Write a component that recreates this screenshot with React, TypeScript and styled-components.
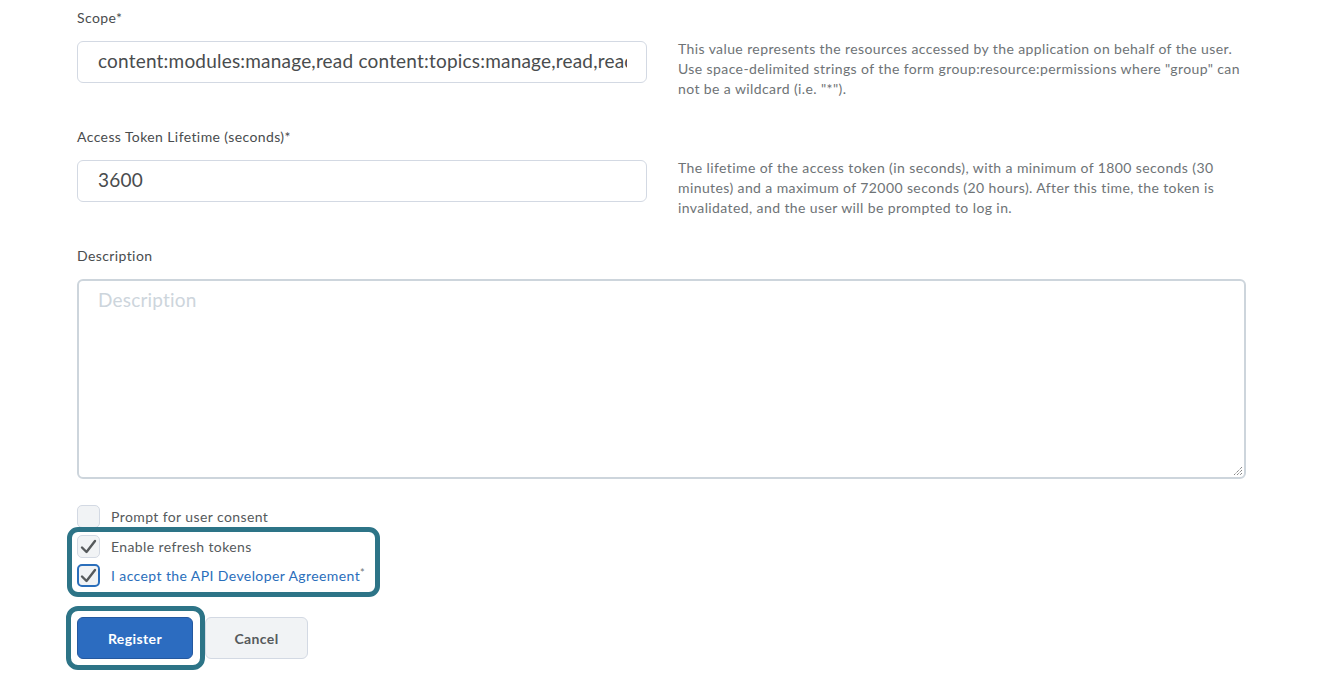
import React from "react";
import styled, { createGlobalStyle } from "styled-components";

const Global = createGlobalStyle`
  html, body { margin: 0; padding: 0; background: #ffffff; }
  body { font-family: Lato, "Open Sans", sans-serif; color: #494c4e; }
  *, *::before, *::after { box-sizing: border-box; }
`;

const Page = styled.div`
  padding: 8px 83px 0 77px;
  width: 1329px;
  min-height: 685px;
`;

const Field = styled.div<{ $last?: boolean }>`
  margin-bottom: ${(p) => (p.$last ? "27px" : "28px")};
`;

const Label = styled.div`
  font-size: 14px;
  letter-spacing: 0.4px;
  line-height: 20px;
  color: #494c4e;
  margin-bottom: 13px;
`;

const Row = styled.div`
  display: grid;
  grid-template-columns: 570px 1fr;
  column-gap: 31px;
  align-items: start;
`;

const TextInput = styled.div`
  height: 42px;
  border: 1px solid #d3d9e3;
  border-radius: 6px;
  padding: 0 19px 4px 20px;
  display: flex;
  align-items: center;
  font-size: 19px;
  letter-spacing: 0.2px;
  color: #494c4e;
`;

const InputValue = styled.span`
  display: block;
  white-space: nowrap;
  overflow: hidden;
  flex: 1;
`;

const Help = styled.p`
  margin: -2px 0 0;
  font-size: 14px;
  letter-spacing: 0.4px;
  line-height: 20px;
  color: #6e7376;
  max-width: 570px;
`;

const TextArea = styled.div`
  height: 200px;
  border: 2px solid #cdd5dc;
  border-radius: 6px;
  padding: 7px 19px;
  font-size: 19px;
  letter-spacing: 0.2px;
  color: #cdd5dc;
  position: relative;
`;

const Grip = styled.svg`
  position: absolute;
  right: 1px;
  bottom: 1px;
`;

const Checks = styled.div`
  margin-top: -1px;
  display: flex;
  flex-direction: column;
  gap: 7px;
`;

const Highlighted = styled.div`
  position: relative;
  display: flex;
  flex-direction: column;
  gap: 6px;
  &::after {
    content: "";
    position: absolute;
    left: -10px;
    top: -8px;
    width: 313px;
    height: 70px;
    border: 5px solid #2d7487;
    border-radius: 11px;
    pointer-events: none;
  }
`;

const CheckRow = styled.label<{ $link?: boolean }>`
  display: flex;
  align-items: center;
  gap: 11px;
  height: 23px;
  font-size: 14px;
  letter-spacing: 0.4px;
  color: ${(p) => (p.$link ? "#2a6ebb" : "#565a5c")};
`;

const Box = styled.span<{ $focus?: boolean }>`
  width: 23px;
  height: 23px;
  border-radius: 5px;
  background: #f1f3f5;
  border: ${(p) => (p.$focus ? "2px solid #2a6ebb" : "1px solid #d3d9e3")};
  display: flex;
  align-items: center;
  justify-content: center;
  flex: none;
`;

const Star = styled.span`
  font-size: 11px;
  position: relative;
  top: -4px;
  color: #6e7376;
`;

const Actions = styled.div`
  display: flex;
  gap: 12px;
  margin-top: 30px;
  align-items: center;
`;

const Button = styled.button<{ $primary?: boolean }>`
  font-family: Lato, sans-serif;
  font-weight: 700;
  font-size: 14px;
  letter-spacing: 0.4px;
  height: 42px;
  border-radius: 6px;
  cursor: pointer;
  width: ${(p) => (p.$primary ? "116px" : "103px")};
  background: ${(p) => (p.$primary ? "#2c6cc0" : "#f1f3f5")};
  color: ${(p) => (p.$primary ? "#ffffff" : "#565a5c")};
  border: 1px solid ${(p) => (p.$primary ? "#24589f" : "#d3d9e3")};
`;

const Ring = styled.div`
  position: relative;
  display: flex;
  &::after {
    content: "";
    position: absolute;
    left: -11px;
    top: -11px;
    right: -12px;
    bottom: -11px;
    border: 5px solid #2d7487;
    border-radius: 12px;
    pointer-events: none;
  }
`;

const Check = () => (
  <svg width="17" height="15" viewBox="0 0 17 15">
    <path d="M2 8.5 L6.5 13 L15 2" fill="none" stroke="#565a5c" strokeWidth="2.4" strokeLinecap="round" strokeLinejoin="round" />
  </svg>
);

export default function App() {
  return (
    <>
      <Global />
      <Page>
        <Field>
          <Label>Scope*</Label>
          <Row>
            <TextInput>
              <InputValue>content:modules:manage,read content:topics:manage,read,read</InputValue>
            </TextInput>
            <Help>
              This value represents the resources accessed by the application on behalf of the user. Use
              space-delimited strings of the form group:resource:permissions where "group" can not be a
              wildcard (i.e. "*").
            </Help>
          </Row>
        </Field>
        <Field>
          <Label>Access Token Lifetime (seconds)*</Label>
          <Row>
            <TextInput>
              <InputValue>3600</InputValue>
            </TextInput>
            <Help>
              The lifetime of the access token (in seconds), with a minimum of 1800 seconds (30 minutes)
              and a maximum of 72000 seconds (20 hours). After this time, the token is invalidated, and
              the user will be prompted to log in.
            </Help>
          </Row>
        </Field>
        <Field $last>
          <Label>Description</Label>
          <TextArea>
            Description
            <Grip width="12" height="12" viewBox="0 0 12 12">
              <path d="M11 3 L3 11 M11 6 L6 11 M11 9 L9 11" stroke="#555" strokeWidth="1" strokeDasharray="1 1" />
            </Grip>
          </TextArea>
        </Field>
        <Checks>
          <CheckRow>
            <Box />
            Prompt for user consent
          </CheckRow>
          <Highlighted>
            <CheckRow>
              <Box>
                <Check />
              </Box>
              Enable refresh tokens
            </CheckRow>
            <CheckRow $link>
              <Box $focus>
                <Check />
              </Box>
              <span>
                I accept the API Developer Agreement<Star>*</Star>
              </span>
            </CheckRow>
          </Highlighted>
        </Checks>
        <Actions>
          <Ring>
            <Button $primary>Register</Button>
          </Ring>
          <Button>Cancel</Button>
        </Actions>
      </Page>
    </>
  );
}
